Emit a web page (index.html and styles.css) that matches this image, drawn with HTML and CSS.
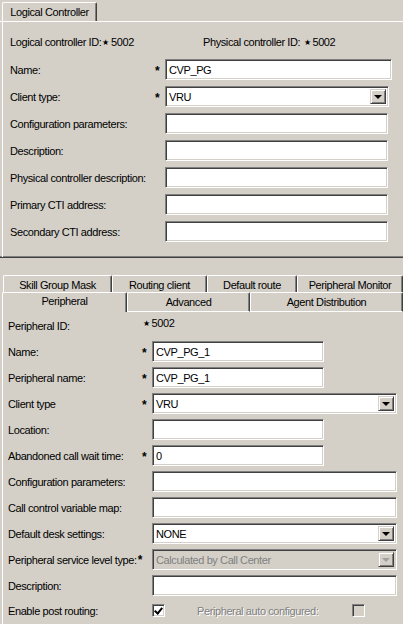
FILE: index.html
```html
<!DOCTYPE html>
<html lang="en">

<head>
    <meta charset="UTF-8">
    <title>Logical Controller</title>
    <link rel="stylesheet" href="styles.css">
</head>

<body>
    <!-- logical controller section -->
    <div class="tabstrip">
        <div class="tab tab-active">Logical Controller</div>
    </div>
    <div class="panel panel-top">
        <div class="ids">
            <span class="id-item">Logical controller ID:<span class="star">&#9733;</span>5002</span>
            <span class="id-item id-phys">Physical controller ID: <span class="star">&#9733;</span>5002</span>
        </div>

        <div class="row">
            <span class="label">Name:</span><span class="req">*</span>
            <div class="edit w-name">CVP_PG</div>
        </div>
        <div class="row">
            <span class="label">Client type:</span><span class="req">*</span>
            <div class="edit combo w-combo">VRU<span class="drop"><span class="arrow"></span></span></div>
        </div>
        <div class="row">
            <span class="label">Configuration parameters:</span><span class="req"></span>
            <div class="edit w-top"></div>
        </div>
        <div class="row">
            <span class="label">Description:</span><span class="req"></span>
            <div class="edit w-top"></div>
        </div>
        <div class="row">
            <span class="label">Physical controller description:</span><span class="req"></span>
            <div class="edit w-top"></div>
        </div>
        <div class="row">
            <span class="label">Primary CTI address:</span><span class="req"></span>
            <div class="edit w-top"></div>
        </div>
        <div class="row">
            <span class="label">Secondary CTI address:</span><span class="req"></span>
            <div class="edit w-top"></div>
        </div>
    </div>

    <!-- peripheral section -->
    <div class="tabs2">
        <div class="tabrow back">
            <div class="tab t-skill">Skill Group Mask</div>
            <div class="tab t-routing">Routing client</div>
            <div class="tab t-default">Default route</div>
            <div class="tab t-monitor">Peripheral Monitor</div>
        </div>
        <div class="tabrow front">
            <div class="tab tab-active t-periph">Peripheral</div>
            <div class="tab t-adv">Advanced</div>
            <div class="tab t-agent">Agent Distribution</div>
        </div>
    </div>
    <div class="panel panel-bottom">
        <div class="prow pid">
            <span class="label">Peripheral ID:</span>
            <span class="pid-val"><span class="star">&#9733;</span>5002</span>
        </div>
        <div class="prow">
            <span class="label">Name:</span><span class="req">*</span>
            <div class="edit w-short">CVP_PG_1</div>
        </div>
        <div class="prow">
            <span class="label">Peripheral name:</span><span class="req">*</span>
            <div class="edit w-short">CVP_PG_1</div>
        </div>
        <div class="prow">
            <span class="label">Client type</span><span class="req">*</span>
            <div class="edit combo w-long">VRU<span class="drop"><span class="arrow"></span></span></div>
        </div>
        <div class="prow">
            <span class="label">Location:</span><span class="req"></span>
            <div class="edit w-short"></div>
        </div>
        <div class="prow">
            <span class="label">Abandoned call wait time:</span><span class="req">*</span>
            <div class="edit w-short">0</div>
        </div>
        <div class="prow">
            <span class="label">Configuration parameters:</span><span class="req"></span>
            <div class="edit w-long"></div>
        </div>
        <div class="prow">
            <span class="label">Call control variable map:</span><span class="req"></span>
            <div class="edit w-long"></div>
        </div>
        <div class="prow">
            <span class="label">Default desk settings:</span><span class="req"></span>
            <div class="edit combo w-long">NONE<span class="drop"><span class="arrow"></span></span></div>
        </div>
        <div class="prow">
            <span class="label label-tight">Peripheral service level type:<b class="req-inline">*</b></span>
            <div class="edit combo disabled w-long">Calculated by Call Center<span class="drop"><span class="arrow"></span></span></div>
        </div>
        <div class="prow">
            <span class="label">Description:</span><span class="req"></span>
            <div class="edit w-long"></div>
        </div>
        <div class="prow checks">
            <span class="label">Enable post routing:</span><span class="req"></span>
            <span class="check checked"></span>
            <span class="gray-label">Peripheral auto configured:</span>
            <span class="check off"></span>
        </div>
    </div>
</body>

</html>
```

FILE: styles.css
```css
* {
    box-sizing: border-box;
}

body {
    margin: 0;
    background-color: #d4d0c8;
    font-family: "Liberation Sans", Arial, sans-serif;
    font-size: 11px;
    letter-spacing: -0.4px;
    color: #000;
    overflow: hidden;
    white-space: nowrap;
}

/* tabs */

.tabstrip {
    display: flex;
    padding: 2px 0 0 2px;
    height: 21px;
}

.tab {
    background-color: #d4d0c8;
    border-top: 1px solid #fff;
    border-left: 1px solid #fff;
    border-right: 1px solid #404040;
    box-shadow: inset -1px 0 #808080;
    border-top-left-radius: 2px;
    border-top-right-radius: 2px;
    display: flex;
    align-items: center;
    justify-content: center;
}

.tabstrip .tab {
    width: 95px;
    height: 19px;
}

.panel {
    border-left: 1px solid #fff;
    margin-left: 2px;
}

.panel-top {
    border-top: 1px solid #fff;
    margin-left: 0;
    padding-left: 2px;
    border-left: none;
    height: 237px;
    border-bottom: 1px solid #404040;
    box-shadow: inset 0 -1px #808080;
    position: relative;
}

.panel-top::before {
    content: "";
    position: absolute;
    left: 2px;
    top: -1px;
    bottom: 0;
    border-left: 1px solid #fff;
}

.panel-top .tab-active {
    height: 20px;
}

.ids {
    display: flex;
    padding: 14px 0 0 8px;
    height: 37px;
}

.id-item {
    width: 193px;
}

.star {
    font-size: 8px;
    margin: 0 2px 0 1px;
    position: relative;
    top: -1px;
}

.row,
.prow {
    display: flex;
    align-items: center;
    height: 21px;
}

.row {
    margin: 0 0 6px 8px;
}

.row .label {
    width: 145px;
}

.req {
    width: 10px;
    font-weight: bold;
    font-size: 12px;
    text-align: left;
    padding-top: 2px;
}

.edit {
    height: 21px;
    background-color: #fff;
    border-top: 1px solid #808080;
    border-left: 1px solid #808080;
    border-right: 1px solid #fff;
    border-bottom: 1px solid #fff;
    box-shadow: inset 1px 1px #404040, inset -1px -1px #d4d0c8;
    padding: 1px 0 0 3px;
    display: flex;
    align-items: center;
    position: relative;
}

.w-name {
    width: 227px;
}

.w-top {
    width: 223px;
}

.w-combo {
    width: 224px;
}

.w-short {
    width: 172px;
}

.w-long {
    width: 245px;
}

.combo .drop {
    position: absolute;
    right: 2px;
    top: 2px;
    width: 16px;
    height: 15px;
    background-color: #d4d0c8;
    border-top: 1px solid #d4d0c8;
    border-left: 1px solid #d4d0c8;
    border-right: 1px solid #404040;
    border-bottom: 1px solid #404040;
    box-shadow: inset 1px 1px #fff, inset -1px -1px #808080;
    display: flex;
    align-items: center;
    justify-content: center;
}

.arrow {
    width: 0;
    height: 0;
    border-left: 4px solid transparent;
    border-right: 4px solid transparent;
    border-top: 4px solid #000;
    margin-top: 1px;
}

.disabled {
    background-color: #d4d0c8;
    color: #808080;
}

.disabled .arrow {
    border-top-color: #a0a0a0;
}

/* second tab control */

.tabs2 {
    margin-top: 17px;
    height: 37px;
}

.tabrow {
    display: flex;
}

.back {
    height: 17px;
    padding-left: 3px;
}

.back .tab {
    height: 17px;
    padding-top: 2px;
}

.front {
    height: 20px;
}

.front .tab {
    height: 20px;
    border-bottom: 1px solid #fff;
    padding-bottom: 1px;
}

.front .tab-active {
    border-bottom: none;
    padding-bottom: 3px;
    margin-left: 2px;
}

.t-skill { width: 109px; }
.t-routing { width: 95px; }
.t-default { width: 90px; }
.t-monitor { width: 106px; }
.t-periph { width: 125px; }
.t-adv { width: 123px; }
.t-agent { width: 153px; }

.panel-bottom {
    height: 313px;
    padding: 7px 0 0 5px;
}

.prow {
    margin-bottom: 5px;
}

.prow.pid {
    height: 14px;
    margin-bottom: 8px;
}

.prow .label {
    width: 134px;
}

.pid-val {
    position: relative;
    top: -3px;
}

.prow .label-tight {
    width: 144px;
}

.req-inline {
    font-size: 12px;
    margin-left: 1px;
}

.prow.checks {
    margin-top: -1px;
}

.check {
    width: 13px;
    height: 13px;
    border-top: 1px solid #808080;
    border-left: 1px solid #808080;
    border-right: 1px solid #fff;
    border-bottom: 1px solid #fff;
    box-shadow: inset 1px 1px #404040, inset -1px -1px #d4d0c8;
    background-color: #fff;
    position: relative;
}

.checked::after {
    content: "";
    position: absolute;
    left: 3px;
    top: 1px;
    width: 3px;
    height: 6px;
    border-right: 2px solid #000;
    border-bottom: 2px solid #000;
    transform: rotate(40deg);
}

.off {
    background-color: #d4d0c8;
}

.gray-label {
    color: #808080;
    text-shadow: 1px 1px #fff;
    margin: 0 30px 0 32px;
    width: 125px;
}
```
